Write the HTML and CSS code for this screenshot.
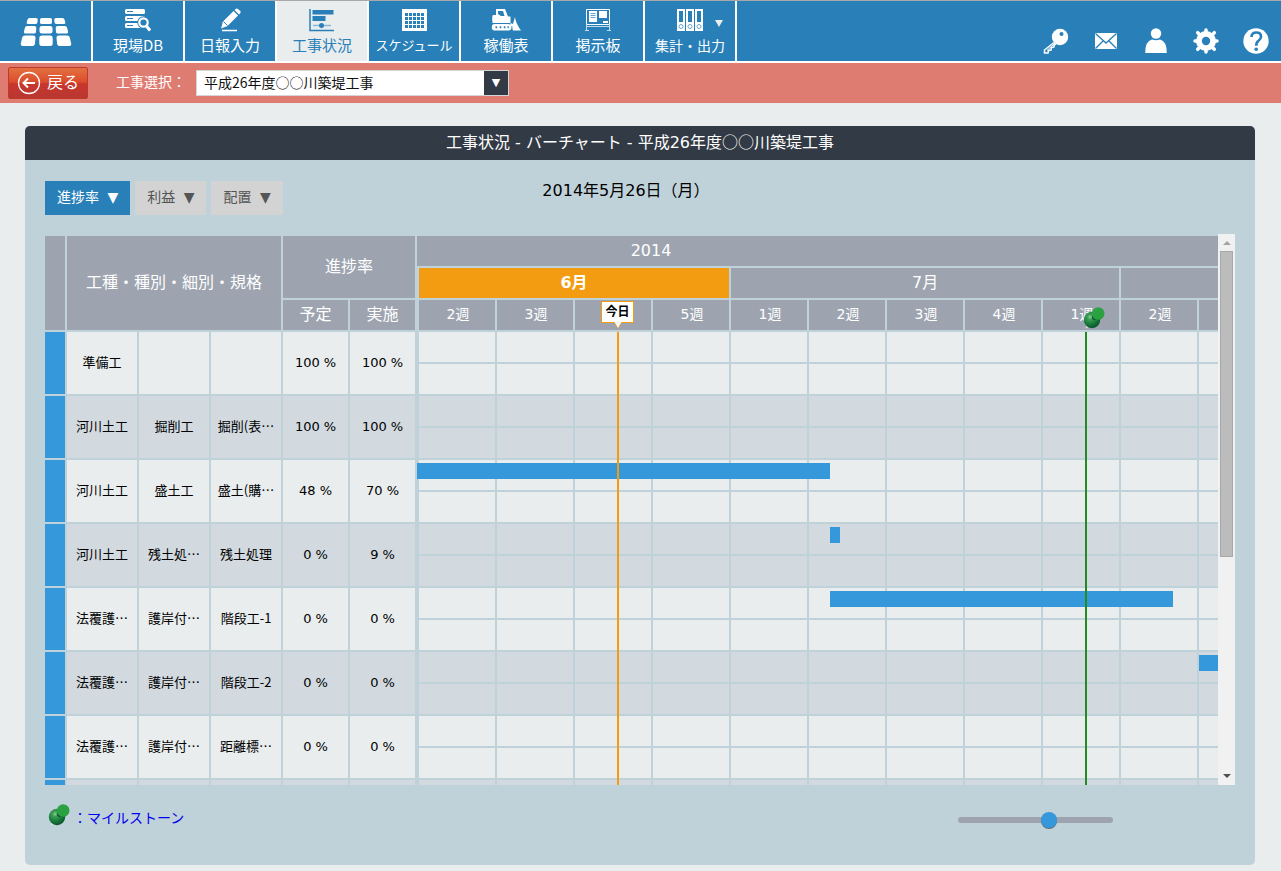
FILE: index.html
```html
<!DOCTYPE html>
<html lang="ja">
<head>
<meta charset="utf-8">
<meta name="viewport" content="width=device-width, initial-scale=1">
<title>工事状況 - バーチャート</title>
<link rel="stylesheet" href="styles.css">
</head>
<body>
<svg class="defs" aria-hidden="true">
  <defs>
    <radialGradient id="pin-ball" cx="0.38" cy="0.32" r="0.75">
      <stop offset="0" stop-color="#8fd09c"/>
      <stop offset="0.2" stop-color="#3f9e57"/>
      <stop offset="0.55" stop-color="#1a7f3c"/>
      <stop offset="1" stop-color="#064a26"/>
    </radialGradient>
    <linearGradient id="pin-cap" x1="0" y1="0" x2="1" y2="1">
      <stop offset="0" stop-color="#2fa348"/>
      <stop offset="1" stop-color="#27a03c"/>
    </linearGradient>
    <symbol id="pin" viewBox="0 0 22 24">
      <path d="M3 22l3-3" stroke="#dfe5e6" stroke-width="1.4"/>
      <circle cx="9" cy="14" r="8.2" fill="url(#pin-ball)"/>
      <ellipse cx="12" cy="11.500" rx="3" ry="2.500" fill="#0b5a2c"/>
      <circle cx="15.200" cy="7.500" r="6.300" fill="url(#pin-cap)"/>
    </symbol>
  </defs>
</svg>

<header class="topbar">
  <nav class="nav">
    <a class="nav-item" href="#home" aria-label="ホーム">
      <svg width="52" height="30" viewBox="0 0 52 30" fill="#fff">
        <path d="M9.500 1h6q2.500 0 2.200 2l-.4 3q-.3 1-2 1h-7q-2 0-1.600-1.500l.8-3Q8 1 9.500 1zM22 1h8q2 0 2 1.500v3Q32 7 30 7h-8q-2 0-2-1.500v-3Q20 1 22 1zM36.500 1h6q1.500 0 2 1.500l.8 3Q45.700 7 43.700 7h-7q-1.700 0-2-1l-.4-3Q34 1 36.500 1z"/>
        <path d="M7 9h7q2.500 0 2.300 1.700L16 15q-.2 1.500-2 1.500H6q-2.500 0-2-2l1-4Q5.400 9 7 9zM22 9h8q2.500 0 2.500 2v3.500q0 2-2.500 2h-8q-2.500 0-2.500-2V11q0-2 2.500-2zM38 9h7q1.600 0 2 1.500l1 4q.5 2-2 2h-8q-1.800 0-2-1.500l-.3-4.300Q35.500 9 38 9z"/>
        <path d="M5 18.500h8q2.700 0 2.500 2.500l-.6 6q-.3 2-2.400 2H3q-2.500 0-2.200-2.500l1.400-6Q2.600 18.500 5 18.500zM22 18.500h8q2.700 0 2.700 2.500v5.500q0 2.500-2.700 2.500h-8q-2.700 0-2.700-2.500V21q0-2.500 2.700-2.500zM39 18.500h8q2.400 0 2.800 2l1.400 6Q51.500 29 49 29h-9.500q-2.100 0-2.400-2l-.6-6q-.2-2.500 2.500-2.500z"/>
      </svg>
    </a>
    <a class="nav-item" href="#db">
      <svg width="26" height="24" viewBox="0 0 26 24">
        <path d="M1.500 1h17q1.500 0 1.500 1.500v2Q20 6 18.500 6h-17Q0 6 0 4.500v-2Q0 1 1.500 1zM1.500 8h17q1.500 0 1.500 1.500v2q0 1.500-1.500 1.500h-17Q0 13 0 11.500v-2Q0 8 1.500 8zM1.500 15h17q1.500 0 1.500 1.500v2q0 1.500-1.500 1.500h-17Q0 20 0 18.500v-2Q0 15 1.500 15z" fill="#fff"/>
        <path d="M2 3.500h6M2 10.500h6M2 17.500h6" stroke="#2980b9"/>
        <circle cx="18.500" cy="14.500" r="6.200" fill="#2980b9"/>
        <circle cx="18.500" cy="14.500" r="4.200" fill="#2980b9" stroke="#fff" stroke-width="2.200"/>
        <path d="M21.500 18l3.500 4.500" stroke="#fff" stroke-width="3"/>
      </svg>
      <span>現場DB</span>
    </a>
    <a class="nav-item" href="#daily">
      <svg width="24" height="24" viewBox="0 0 24 24">
        <path d="M5 13.500L15.500 3l4.500 4.500L9.500 18l-6.500 2.500zM16.500 2l1.500-1.300q1-.7 2 .2L22.300 3q.8 1 .1 2L21 6.500z" fill="#fff"/>
        <path d="M5 14l4 4M4 22.500h15" stroke="#fff" stroke-width="1.500"/>
        <path d="M5.500 13.500l4 4" stroke="#2980b9"/>
      </svg>
      <span>日報入力</span>
    </a>
    <a class="nav-item active" href="#status" aria-current="page">
      <svg width="26" height="24" viewBox="0 0 26 24">
        <path d="M1 1v21.500h24" fill="none" stroke="#2980b9" stroke-width="1.500"/>
        <path d="M3.500 2h21v4.500h-21zM3.500 8h13v5h-13z" fill="#2980b9"/>
        <path d="M4 17.500h18" stroke="#8ab8d6" stroke-width="1.500"/>
        <circle cx="12.500" cy="17.500" r="2.500" fill="#2980b9"/>
      </svg>
      <span>工事状況</span>
    </a>
    <a class="nav-item narrow" href="#schedule">
      <svg width="25" height="24" viewBox="0 0 25 24">
        <path d="M0 1h25v22H0z" fill="#fff"/>
        <path d="M3 5h19v15H3z" fill="#2980b9"/>
        <path d="M6.500 4v17M10.500 4v17M14.500 4v17M18.500 4v17M2 8.500h21M2 12.500h21M2 16.500h21" stroke="#fff"/>
      </svg>
      <span>スケジュール</span>
    </a>
    <a class="nav-item" href="#machines">
      <svg width="30" height="24" viewBox="0 0 30 24">
        <path d="M5 1h9l3 7.500h2.500V15H1.500q-.8-8 .7-8H5zM3.500 16h13.500q3.500 0 3.500 3.300T17 22.500H3.500Q.8 22.500.8 19.300T3.500 16zM24 9q.5 6 6 13.500h-8q-1-2-.5-4l-2-1V15l2.500 1z" fill="#fff"/>
        <path d="M7 3h5l1.500 5H10L7 6z" fill="#2980b9"/>
        <path d="M4.500 19.300h1.600M8.700 19.300h1.600M12.800 19.300h1.600M16.500 19.300h1.300" stroke="#2980b9" stroke-width="2"/>
      </svg>
      <span>稼働表</span>
    </a>
    <a class="nav-item" href="#board">
      <svg width="26" height="24" viewBox="0 0 26 24">
        <path d="M1.500 1.500h23v15h-23z" fill="none" stroke="#fff"/>
        <path d="M1.500 17v6M24.500 17v6M0 22.500h4M22 22.500h4M1 18.500h24" stroke="#c3dcec"/>
        <path d="M4 3h8v11H4zM14 3h8v7h-8zM18 13h5v2h-5z" fill="#fff"/>
        <path d="M5.500 5.500h5M5.500 7.500h5M5.500 9.500h5" stroke="#69a6cf"/>
      </svg>
      <span>掲示板</span>
    </a>
    <a class="nav-item small" href="#reports">
      <svg width="28" height="24" viewBox="0 0 28 24">
        <path d="M1 1h8v22H1zM10 1h8v22h-8zM19 1h8v22h-8z" fill="#fff"/>
        <path d="M3 3h4v11H3zM12 3h4v11h-4zM21 3h4v11h-4z" fill="#2980b9"/>
        <g fill="none" stroke="#69a6cf"><circle cx="5" cy="18.500" r="2"/><circle cx="14" cy="18.500" r="2"/><circle cx="23" cy="18.500" r="2"/></g>
      </svg>
      <span>集計・出力</span>
      <i class="caret"></i>
    </a>
  </nav>
  <div class="tools">
    <a href="#key" aria-label="ログイン情報"><svg width="26" height="26" viewBox="0 0 26 26">
      <path d="M11 14.500L1.500 22v3H5l.5-2.500 2.500-.5.500-2.500 2.500-.5v-2l2-1" fill="none" stroke="#fff" stroke-width="1.500"/>
      <path d="M12 15l-8 7.500" stroke="#fff"/>
      <circle cx="17" cy="9" r="8.200" fill="#fff"/><circle cx="18.500" cy="6" r="2" fill="#2980b9"/>
    </svg></a>
    <a href="#mail" aria-label="メール"><svg width="26" height="26" viewBox="0 0 26 26">
      <path d="M2 5h22v16H2z" fill="#fff"/>
      <path d="M2.500 5.500L13 15 23.500 5.500M2.500 20.500l8-8M23.500 20.500l-8-8" fill="none" stroke="#2980b9" stroke-width="1.300"/>
    </svg></a>
    <a href="#user" aria-label="ユーザー"><svg width="26" height="26" viewBox="0 0 26 26" fill="#fff">
      <circle cx="13" cy="5.500" r="5.200"/><path d="M2.200 25q0-12 6.800-13.500 4 1.500 8 0Q23.800 13 23.800 25z"/>
    </svg></a>
    <a href="#settings" aria-label="設定"><svg width="26" height="26" viewBox="0 0 26 26">
      <circle cx="13" cy="13" r="10" fill="#fff"/>
      <g stroke="#fff" stroke-width="3.500" stroke-linecap="round"><path d="M13 2v22M2 13h22M4.700 4.700l16.600 16.600M21.300 4.700L4.700 21.300"/></g>
      <circle cx="13" cy="13" r="4.200" fill="#2980b9"/>
    </svg></a>
    <a href="#help" aria-label="ヘルプ"><svg width="26" height="26" viewBox="0 0 26 26">
      <circle cx="13" cy="13" r="12.700" fill="#fff"/>
      <path d="M8.500 9q0-4.500 4.800-4.500T18 8.800q0 2.200-2.500 4-2.300 1.500-2.300 5" fill="none" stroke="#2980b9" stroke-width="2.600"/>
      <circle cx="13.200" cy="21.300" r="1.800" fill="#2980b9"/>
    </svg></a>
  </div>
</header>

<form class="subbar">
  <button class="back" type="button">
    <svg width="24" height="24" viewBox="0 0 24 24" fill="none" stroke="#fff">
      <circle cx="12" cy="12" r="10.500" stroke-width="1.300"/>
      <path d="M18 12H7M11 7.500L6.500 12l4.500 4.500" stroke-width="2"/>
    </svg>
    <span>戻る</span>
  </button>
  <label for="project">工事選択：</label>
  <span class="select-wrap">
    <select id="project"><option>平成26年度○○川築堤工事</option></select>
  </span>
</form>

<main class="panel">
  <h1 class="panel-title">工事状況 - バーチャート - 平成26年度<span class="kanji">○○</span>川築堤工事</h1>
  <div class="panel-body">
    <div class="toolbar">
      <div class="tabs">
        <button class="tab on" type="button">進捗率 <span>▼</span></button>
        <button class="tab" type="button">利益 <span>▼</span></button>
        <button class="tab" type="button">配置 <span>▼</span></button>
      </div>
      <p class="date">2014年5月26日（月）</p>
    </div>

    <div class="chart">
      <table class="works">
        <colgroup><col class="c-stripe"><col class="c-name"><col class="c-name"><col class="c-name"><col class="c-rate"><col class="c-rate"></colgroup>
        <thead>
          <tr class="h-double"><th rowspan="2"></th><th rowspan="2" colspan="3">工種・種別・細別・規格</th><th colspan="2">進捗率</th></tr>
          <tr class="h-single"><th>予定</th><th>実施</th></tr>
        </thead>
        <tbody>
          <tr><th></th><td>準備工</td><td></td><td></td><td class="rate">100 %</td><td class="rate">100 %</td></tr>
          <tr><th></th><td>河川土工</td><td>掘削工</td><td>掘削(表…</td><td class="rate">100 %</td><td class="rate">100 %</td></tr>
          <tr><th></th><td>河川土工</td><td>盛土工</td><td>盛土(購…</td><td class="rate">48 %</td><td class="rate">70 %</td></tr>
          <tr><th></th><td>河川土工</td><td>残土処…</td><td>残土処理</td><td class="rate">0 %</td><td class="rate">9 %</td></tr>
          <tr><th></th><td>法覆護…</td><td>護岸付…</td><td>階段工-1</td><td class="rate">0 %</td><td class="rate">0 %</td></tr>
          <tr><th></th><td>法覆護…</td><td>護岸付…</td><td>階段工-2</td><td class="rate">0 %</td><td class="rate">0 %</td></tr>
          <tr><th></th><td>法覆護…</td><td>護岸付…</td><td>距離標…</td><td class="rate">0 %</td><td class="rate">0 %</td></tr>
          <tr><th></th><td></td><td></td><td></td><td></td><td></td></tr>
        </tbody>
      </table>

      <div class="timeline">
        <table class="weeks">
          <thead>
            <tr class="years"><th colspan="13"><span>2014</span></th></tr>
            <tr><th class="now" colspan="4">6月</th><th colspan="5">7月</th><th colspan="4"></th></tr>
            <tr class="week-row"><th>2週</th><th>3週</th><th></th><th>5週</th><th>1週</th><th>2週</th><th>3週</th><th>4週</th><th>1週</th><th>2週</th><th></th><th></th><th></th></tr>
          </thead>
          <tbody>
            <tr><td colspan="13"></td></tr>
            <tr><td colspan="13"></td></tr>
            <tr><td colspan="13"><i class="bar" style="left:0;width:413px"></i></td></tr>
            <tr><td colspan="13"><i class="bar" style="left:413px;width:10px"></i></td></tr>
            <tr><td colspan="13"><i class="bar" style="left:413px;width:343px"></i></td></tr>
            <tr><td colspan="13"><i class="bar" style="left:782px;width:140px"></i></td></tr>
            <tr><td colspan="13"></td></tr>
            <tr><td colspan="13"></td></tr>
          </tbody>
        </table>
        <i class="line today"></i>
        <span class="today-tag">今日</span>
        <i class="line milestone"></i>
        <svg class="milestone-pin" width="22" height="24"><use href="#pin"/></svg>
      </div>

      <div class="scrollbar" aria-hidden="true">
        <i class="up"></i><i class="thumb"></i><i class="down"></i>
      </div>
    </div>

    <div class="footer">
      <p class="legend"><svg width="22" height="24"><use href="#pin"/></svg><span>：マイルストーン</span></p>
      <input class="zoom" type="range" min="0" max="100" value="60" aria-label="表示幅">
    </div>
  </div>
</main>
</body>
</html>
```

FILE: styles.css
```css
* { box-sizing: border-box; }

body {
  margin: 0;
  background: #e9edee;
  color: #000;
  font: 16px/24px "DejaVu Sans", "Noto Sans CJK JP", sans-serif;
}

p, h1 { margin: 0; font-weight: normal; }
a { text-decoration: none; }
button, select, input { font: inherit; margin: 0; }
svg { display: block; flex: none; }
.defs { position: absolute; width: 0; height: 0; }
.kanji { font-family: "Noto Sans CJK JP", sans-serif; }

/* top navigation */
.topbar {
  display: flex;
  justify-content: space-between;
  background: #2980b9;
  border-top: 1px solid #a9a9a9;
  border-bottom: 2px solid #fff;
}
.nav { display: flex; }
.nav-item {
  position: relative;
  display: flex;
  flex-direction: column;
  align-items: center;
  justify-content: center;
  gap: 2px;
  width: 92px;
  height: 60px;
  padding-top: 2px;
  border-right: 2px solid #fff;
  color: #fff;
  font: 15px/22px "Noto Sans CJK JP", sans-serif;
  white-space: nowrap;
}
.nav-item:first-child { width: 93px; }
.nav-item.small { font-size: 14px; }
.nav-item.narrow { font-size: 13px; }
.nav-item.active { background: #e9edee; color: #2980b9; }
.caret {
  position: absolute;
  top: 19px;
  right: 12px;
  border: 4px solid transparent;
  border-top: 7px solid #e9edee;
  border-bottom: 0;
}
.tools {
  display: flex;
  align-items: flex-end;
  gap: 24px;
  padding: 0 12px 7px 0;
}

/* project bar */
.subbar {
  display: flex;
  align-items: center;
  height: 40px;
  padding: 0 8px;
  background: #df7c71;
  font: 14px/20px "Noto Sans CJK JP", sans-serif;
}
.back {
  display: flex;
  align-items: center;
  gap: 6px;
  width: 80px;
  height: 32px;
  padding: 0 8px;
  border: 1px solid #c0392b;
  border-radius: 2px;
  background: linear-gradient(#e27240, #dc4a2c 48%, #c8372c 52%, #b83632);
  color: #fff;
  font-size: 16px;
  white-space: nowrap;
}
.back span { padding-bottom: 4px; }
.subbar label { margin: 0 10px 0 28px; padding-bottom: 4px; color: #fff; }
.select-wrap { position: relative; width: 313px; }
.select-wrap select {
  display: block;
  width: 100%;
  height: 26px;
  padding: 0 32px 3px 7px;
  border: 1px solid #d5d5d5;
  border-radius: 0;
  background: #fff;
  color: #111;
  appearance: none;
}
.select-wrap::after {
  content: "▼";
  position: absolute;
  top: 1px;
  right: 1px;
  width: 24px;
  height: 24px;
  background: #323a45;
  color: #fff;
  font: 11px/24px "DejaVu Sans", sans-serif;
  text-align: center;
  pointer-events: none;
}

/* panel */
.panel {
  margin: 23px 26px 6px 25px;
  border-radius: 5px;
  background: #c0d2d9;
  overflow: hidden;
}
.panel-title {
  height: 34px;
  background: #323a45;
  color: #fff;
  font-size: 16px;
  line-height: 31px;
  text-align: center;
}
.panel-body { padding: 19px 20px 32px; }
.toolbar {
  display: grid;
  grid-template-columns: 1fr auto 1fr;
  padding-top: 2px;
}
.tabs { display: flex; gap: 5px; }
.tab {
  height: 34px;
  padding: 0 12px 3px;
  border: 0;
  background: #d3d3d3;
  color: #555;
  font-size: 14px;
  white-space: nowrap;
}
.tab span { margin-left: 4px; }
.tab.on { background: #2980b9; color: #fff; }
.date { padding-right: 28px; line-height: 20px; }

/* bar chart */
.chart {
  display: flex;
  align-items: flex-start;
  height: 551px;
  margin-top: 19px;
  overflow: hidden;
}
.chart table {
  margin-top: 2px;
  border-collapse: separate;
  border-spacing: 0;
  table-layout: fixed;
}
.chart th, .chart td {
  height: 32px;
  padding: 0;
  border: 0 solid #c0d2d9;
  overflow: hidden;
  font-weight: normal;
  text-align: center;
  white-space: nowrap;
}
.chart th { background: #9da4af; color: #fff; line-height: 24px; }
.chart tbody tr { height: 64px; }
.chart tbody td { background: #e9edee; }
.chart tbody tr:nth-child(even) td { background-color: #d2dae0; }

.works { flex: none; width: 372px; }
.works th, .works td { border-width: 0 2px 2px 0; }
.chart .works td { padding-bottom: 2px; font: 13px/20px "Noto Sans CJK JP", sans-serif; }
.chart .works .rate { padding-bottom: 1px; font-family: "DejaVu Sans", sans-serif; }
.works tbody th { background: #3498db; }
.works .h-double th { height: 64px; }
.c-stripe { width: 22px; }
.c-name { width: 72px; }
.c-rate { width: 67px; }

.timeline { position: relative; flex: 1; min-width: 0; height: 551px; overflow: hidden; }
.weeks { width: 1014px; }
.weeks th { border-width: 0 0 2px 2px; }
.weeks .years th { border-left: 0; text-align: left; }
.years span { display: block; width: 468px; text-align: center; }
.weeks .now { background: #f39c12; font-weight: bold; }
.chart .week-row th { padding: 0 0 2px 2px; font-size: 14px; line-height: 22px; }
.weeks tbody td {
  position: relative;
  height: 64px;
  background-image:
    linear-gradient(#c0d2d9, #c0d2d9),
    linear-gradient(#c0d2d9, #c0d2d9),
    linear-gradient(90deg, #c0d2d9 2px, transparent 2px);
  background-size: 78px 2px, 78px 2px, 78px 64px;
  background-repeat: repeat-x;
  background-position: 0 30px, 0 62px, 0 0;
}
.bar { position: absolute; top: 3px; height: 16px; background: #3498db; }
.line { position: absolute; top: 98px; bottom: 0; width: 2px; }
.today { left: 200px; background: #f39c12; }
.milestone { left: 668px; background: #228b22; }
.today-tag {
  position: absolute;
  top: 67px;
  left: 184px;
  width: 33px;
  height: 22px;
  border: 1px solid #f39c12;
  background: #fff;
  font: bold 12px/18px "Noto Sans CJK JP", sans-serif;
  text-align: center;
}
.today-tag::after {
  content: "";
  position: absolute;
  top: 19px;
  left: 12px;
  border: 4px solid transparent;
  border-top: 7px solid #fff;
  border-bottom: 0;
  filter: drop-shadow(0 1px 0 #f39c12);
}
.milestone-pin { position: absolute; top: 72px; left: 666px; }

.scrollbar {
  display: flex;
  flex-direction: column;
  align-items: center;
  width: 17px;
  height: 100%;
  background: #f1f1f1;
}
.scrollbar .up, .scrollbar .down { border: 4px solid transparent; }
.scrollbar .up { margin: 7px 0 6px; border-top: 0; border-bottom-color: #a3a3a3; }
.scrollbar .down { margin: auto 0 7px; border-bottom: 0; border-top-color: #505050; }
.scrollbar .thumb { width: 13px; height: 306px; background: #bcbcbc; border: 1px solid #a8a8a8; }

/* legend and zoom slider */
.footer {
  display: flex;
  align-items: center;
  justify-content: space-between;
  padding: 18px 122px 0 3px;
}
.legend { display: flex; gap: 3px; color: #0000ee; font: 14px/28px "Noto Sans CJK JP", sans-serif; }
.legend svg { margin-bottom: 6px; }
.zoom {
  width: 155px;
  height: 18px;
  margin-top: 3px;
  background: transparent;
  appearance: none;
}
.zoom::-webkit-slider-runnable-track { height: 6px; border-radius: 3px; background: #9da4af; }
.zoom::-webkit-slider-thumb {
  width: 16px;
  height: 16px;
  margin-top: -5px;
  border-radius: 50%;
  background: #3498db;
  box-shadow: 0 1px 0 #5d6f80;
  appearance: none;
}
```
